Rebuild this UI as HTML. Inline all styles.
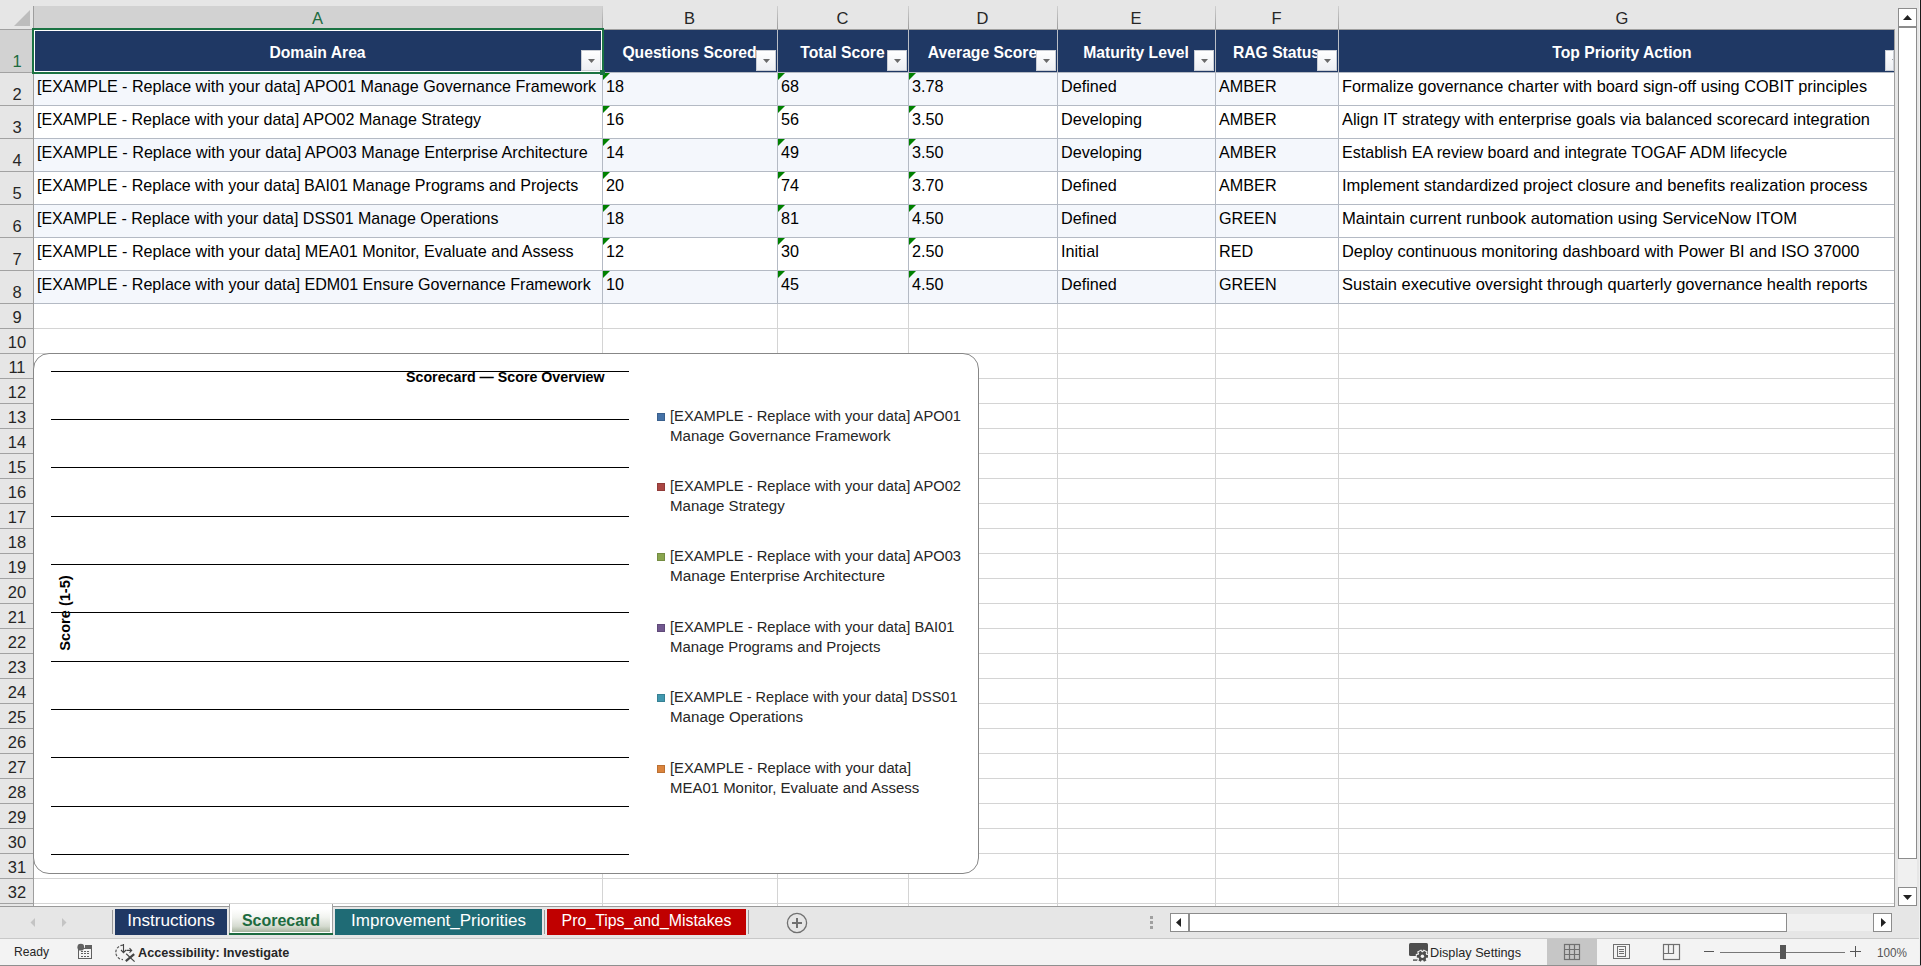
<!DOCTYPE html>
<html><head><meta charset="utf-8"><style>
html,body{margin:0;padding:0;}
body{width:1921px;height:966px;overflow:hidden;position:relative;background:#fff;font-family:"Liberation Sans",sans-serif;color:#000;}
div{box-sizing:border-box;}
.t{position:absolute;white-space:nowrap;line-height:16px;}
</style></head><body>
<div style="position:absolute;left:0px;top:0px;width:1921px;height:29px;background:#E6E6E6;"></div>
<div style="position:absolute;left:33px;top:6px;width:569px;height:23px;background:#D2D2D2;"></div>
<div style="position:absolute;left:602px;top:6px;width:1px;height:23px;background:linear-gradient(#D0D0D0,#9C9C9C);"></div>
<div style="position:absolute;left:777px;top:6px;width:1px;height:23px;background:linear-gradient(#D0D0D0,#9C9C9C);"></div>
<div style="position:absolute;left:908px;top:6px;width:1px;height:23px;background:linear-gradient(#D0D0D0,#9C9C9C);"></div>
<div style="position:absolute;left:1057px;top:6px;width:1px;height:23px;background:linear-gradient(#D0D0D0,#9C9C9C);"></div>
<div style="position:absolute;left:1215px;top:6px;width:1px;height:23px;background:linear-gradient(#D0D0D0,#9C9C9C);"></div>
<div style="position:absolute;left:1338px;top:6px;width:1px;height:23px;background:linear-gradient(#D0D0D0,#9C9C9C);"></div>
<div style="position:absolute;left:33px;top:6px;width:1px;height:23px;background:linear-gradient(#D0D0D0,#9C9C9C);"></div>
<div style="position:absolute;left:0px;top:29px;width:1894px;height:1px;background:#A0A0A0;"></div>
<svg style="position:absolute;left:0;top:0" width="33" height="29"><polygon points="30,10 30,26 14,26" fill="#BDBDBD"/></svg>
<div style="position:absolute;left:287.5px;top:10.03px;width:60px;text-align:center;white-space:nowrap;font-size:16.5px;line-height:16.5px;color:#1D6B40;">A</div>
<div style="position:absolute;left:659.5px;top:10.03px;width:60px;text-align:center;white-space:nowrap;font-size:16.5px;line-height:16.5px;color:#262626;">B</div>
<div style="position:absolute;left:812.5px;top:10.03px;width:60px;text-align:center;white-space:nowrap;font-size:16.5px;line-height:16.5px;color:#262626;">C</div>
<div style="position:absolute;left:952.5px;top:10.03px;width:60px;text-align:center;white-space:nowrap;font-size:16.5px;line-height:16.5px;color:#262626;">D</div>
<div style="position:absolute;left:1106.0px;top:10.03px;width:60px;text-align:center;white-space:nowrap;font-size:16.5px;line-height:16.5px;color:#262626;">E</div>
<div style="position:absolute;left:1246.5px;top:10.03px;width:60px;text-align:center;white-space:nowrap;font-size:16.5px;line-height:16.5px;color:#262626;">F</div>
<div style="position:absolute;left:1592.0px;top:10.03px;width:60px;text-align:center;white-space:nowrap;font-size:16.5px;line-height:16.5px;color:#262626;">G</div>
<div style="position:absolute;left:0px;top:30px;width:33px;height:876px;background:#E6E6E6;"></div>
<div style="position:absolute;left:0px;top:30px;width:33px;height:42px;background:#D2D2D2;"></div>
<div style="position:absolute;left:0px;top:72px;width:33px;height:1px;background:#A2A2A2;"></div>
<div style="position:absolute;left:0px;top:105px;width:33px;height:1px;background:#A2A2A2;"></div>
<div style="position:absolute;left:0px;top:138px;width:33px;height:1px;background:#A2A2A2;"></div>
<div style="position:absolute;left:0px;top:171px;width:33px;height:1px;background:#A2A2A2;"></div>
<div style="position:absolute;left:0px;top:204px;width:33px;height:1px;background:#A2A2A2;"></div>
<div style="position:absolute;left:0px;top:237px;width:33px;height:1px;background:#A2A2A2;"></div>
<div style="position:absolute;left:0px;top:270px;width:33px;height:1px;background:#A2A2A2;"></div>
<div style="position:absolute;left:0px;top:303px;width:33px;height:1px;background:#A2A2A2;"></div>
<div style="position:absolute;left:0px;top:328px;width:33px;height:1px;background:#A2A2A2;"></div>
<div style="position:absolute;left:0px;top:353px;width:33px;height:1px;background:#A2A2A2;"></div>
<div style="position:absolute;left:0px;top:378px;width:33px;height:1px;background:#A2A2A2;"></div>
<div style="position:absolute;left:0px;top:403px;width:33px;height:1px;background:#A2A2A2;"></div>
<div style="position:absolute;left:0px;top:428px;width:33px;height:1px;background:#A2A2A2;"></div>
<div style="position:absolute;left:0px;top:453px;width:33px;height:1px;background:#A2A2A2;"></div>
<div style="position:absolute;left:0px;top:478px;width:33px;height:1px;background:#A2A2A2;"></div>
<div style="position:absolute;left:0px;top:503px;width:33px;height:1px;background:#A2A2A2;"></div>
<div style="position:absolute;left:0px;top:528px;width:33px;height:1px;background:#A2A2A2;"></div>
<div style="position:absolute;left:0px;top:553px;width:33px;height:1px;background:#A2A2A2;"></div>
<div style="position:absolute;left:0px;top:578px;width:33px;height:1px;background:#A2A2A2;"></div>
<div style="position:absolute;left:0px;top:603px;width:33px;height:1px;background:#A2A2A2;"></div>
<div style="position:absolute;left:0px;top:628px;width:33px;height:1px;background:#A2A2A2;"></div>
<div style="position:absolute;left:0px;top:653px;width:33px;height:1px;background:#A2A2A2;"></div>
<div style="position:absolute;left:0px;top:678px;width:33px;height:1px;background:#A2A2A2;"></div>
<div style="position:absolute;left:0px;top:703px;width:33px;height:1px;background:#A2A2A2;"></div>
<div style="position:absolute;left:0px;top:728px;width:33px;height:1px;background:#A2A2A2;"></div>
<div style="position:absolute;left:0px;top:753px;width:33px;height:1px;background:#A2A2A2;"></div>
<div style="position:absolute;left:0px;top:778px;width:33px;height:1px;background:#A2A2A2;"></div>
<div style="position:absolute;left:0px;top:803px;width:33px;height:1px;background:#A2A2A2;"></div>
<div style="position:absolute;left:0px;top:828px;width:33px;height:1px;background:#A2A2A2;"></div>
<div style="position:absolute;left:0px;top:853px;width:33px;height:1px;background:#A2A2A2;"></div>
<div style="position:absolute;left:0px;top:878px;width:33px;height:1px;background:#A2A2A2;"></div>
<div style="position:absolute;left:0px;top:903px;width:33px;height:1px;background:#A2A2A2;"></div>
<div style="position:absolute;left:33px;top:6px;width:1px;height:900px;background:#9E9E9E;"></div>
<div style="position:absolute;left:0px;top:53.03px;width:34px;text-align:center;white-space:nowrap;font-size:16.5px;line-height:16.5px;color:#1D6B40;">1</div>
<div style="position:absolute;left:0px;top:86.03px;width:34px;text-align:center;white-space:nowrap;font-size:16.5px;line-height:16.5px;color:#262626;">2</div>
<div style="position:absolute;left:0px;top:119.03px;width:34px;text-align:center;white-space:nowrap;font-size:16.5px;line-height:16.5px;color:#262626;">3</div>
<div style="position:absolute;left:0px;top:152.03px;width:34px;text-align:center;white-space:nowrap;font-size:16.5px;line-height:16.5px;color:#262626;">4</div>
<div style="position:absolute;left:0px;top:185.03px;width:34px;text-align:center;white-space:nowrap;font-size:16.5px;line-height:16.5px;color:#262626;">5</div>
<div style="position:absolute;left:0px;top:218.03px;width:34px;text-align:center;white-space:nowrap;font-size:16.5px;line-height:16.5px;color:#262626;">6</div>
<div style="position:absolute;left:0px;top:251.03px;width:34px;text-align:center;white-space:nowrap;font-size:16.5px;line-height:16.5px;color:#262626;">7</div>
<div style="position:absolute;left:0px;top:284.03px;width:34px;text-align:center;white-space:nowrap;font-size:16.5px;line-height:16.5px;color:#262626;">8</div>
<div style="position:absolute;left:0px;top:309.03px;width:34px;text-align:center;white-space:nowrap;font-size:16.5px;line-height:16.5px;color:#262626;">9</div>
<div style="position:absolute;left:0px;top:334.03px;width:34px;text-align:center;white-space:nowrap;font-size:16.5px;line-height:16.5px;color:#262626;">10</div>
<div style="position:absolute;left:0px;top:359.03px;width:34px;text-align:center;white-space:nowrap;font-size:16.5px;line-height:16.5px;color:#262626;">11</div>
<div style="position:absolute;left:0px;top:384.03px;width:34px;text-align:center;white-space:nowrap;font-size:16.5px;line-height:16.5px;color:#262626;">12</div>
<div style="position:absolute;left:0px;top:409.03px;width:34px;text-align:center;white-space:nowrap;font-size:16.5px;line-height:16.5px;color:#262626;">13</div>
<div style="position:absolute;left:0px;top:434.03px;width:34px;text-align:center;white-space:nowrap;font-size:16.5px;line-height:16.5px;color:#262626;">14</div>
<div style="position:absolute;left:0px;top:459.03px;width:34px;text-align:center;white-space:nowrap;font-size:16.5px;line-height:16.5px;color:#262626;">15</div>
<div style="position:absolute;left:0px;top:484.03px;width:34px;text-align:center;white-space:nowrap;font-size:16.5px;line-height:16.5px;color:#262626;">16</div>
<div style="position:absolute;left:0px;top:509.03px;width:34px;text-align:center;white-space:nowrap;font-size:16.5px;line-height:16.5px;color:#262626;">17</div>
<div style="position:absolute;left:0px;top:534.03px;width:34px;text-align:center;white-space:nowrap;font-size:16.5px;line-height:16.5px;color:#262626;">18</div>
<div style="position:absolute;left:0px;top:559.03px;width:34px;text-align:center;white-space:nowrap;font-size:16.5px;line-height:16.5px;color:#262626;">19</div>
<div style="position:absolute;left:0px;top:584.03px;width:34px;text-align:center;white-space:nowrap;font-size:16.5px;line-height:16.5px;color:#262626;">20</div>
<div style="position:absolute;left:0px;top:609.03px;width:34px;text-align:center;white-space:nowrap;font-size:16.5px;line-height:16.5px;color:#262626;">21</div>
<div style="position:absolute;left:0px;top:634.03px;width:34px;text-align:center;white-space:nowrap;font-size:16.5px;line-height:16.5px;color:#262626;">22</div>
<div style="position:absolute;left:0px;top:659.03px;width:34px;text-align:center;white-space:nowrap;font-size:16.5px;line-height:16.5px;color:#262626;">23</div>
<div style="position:absolute;left:0px;top:684.03px;width:34px;text-align:center;white-space:nowrap;font-size:16.5px;line-height:16.5px;color:#262626;">24</div>
<div style="position:absolute;left:0px;top:709.03px;width:34px;text-align:center;white-space:nowrap;font-size:16.5px;line-height:16.5px;color:#262626;">25</div>
<div style="position:absolute;left:0px;top:734.03px;width:34px;text-align:center;white-space:nowrap;font-size:16.5px;line-height:16.5px;color:#262626;">26</div>
<div style="position:absolute;left:0px;top:759.03px;width:34px;text-align:center;white-space:nowrap;font-size:16.5px;line-height:16.5px;color:#262626;">27</div>
<div style="position:absolute;left:0px;top:784.03px;width:34px;text-align:center;white-space:nowrap;font-size:16.5px;line-height:16.5px;color:#262626;">28</div>
<div style="position:absolute;left:0px;top:809.03px;width:34px;text-align:center;white-space:nowrap;font-size:16.5px;line-height:16.5px;color:#262626;">29</div>
<div style="position:absolute;left:0px;top:834.03px;width:34px;text-align:center;white-space:nowrap;font-size:16.5px;line-height:16.5px;color:#262626;">30</div>
<div style="position:absolute;left:0px;top:859.03px;width:34px;text-align:center;white-space:nowrap;font-size:16.5px;line-height:16.5px;color:#262626;">31</div>
<div style="position:absolute;left:0px;top:884.03px;width:34px;text-align:center;white-space:nowrap;font-size:16.5px;line-height:16.5px;color:#262626;">32</div>
<div style="position:absolute;left:34px;top:303px;width:1860px;height:1px;background:#D4D4D4;"></div>
<div style="position:absolute;left:34px;top:328px;width:1860px;height:1px;background:#D4D4D4;"></div>
<div style="position:absolute;left:34px;top:353px;width:1860px;height:1px;background:#D4D4D4;"></div>
<div style="position:absolute;left:34px;top:378px;width:1860px;height:1px;background:#D4D4D4;"></div>
<div style="position:absolute;left:34px;top:403px;width:1860px;height:1px;background:#D4D4D4;"></div>
<div style="position:absolute;left:34px;top:428px;width:1860px;height:1px;background:#D4D4D4;"></div>
<div style="position:absolute;left:34px;top:453px;width:1860px;height:1px;background:#D4D4D4;"></div>
<div style="position:absolute;left:34px;top:478px;width:1860px;height:1px;background:#D4D4D4;"></div>
<div style="position:absolute;left:34px;top:503px;width:1860px;height:1px;background:#D4D4D4;"></div>
<div style="position:absolute;left:34px;top:528px;width:1860px;height:1px;background:#D4D4D4;"></div>
<div style="position:absolute;left:34px;top:553px;width:1860px;height:1px;background:#D4D4D4;"></div>
<div style="position:absolute;left:34px;top:578px;width:1860px;height:1px;background:#D4D4D4;"></div>
<div style="position:absolute;left:34px;top:603px;width:1860px;height:1px;background:#D4D4D4;"></div>
<div style="position:absolute;left:34px;top:628px;width:1860px;height:1px;background:#D4D4D4;"></div>
<div style="position:absolute;left:34px;top:653px;width:1860px;height:1px;background:#D4D4D4;"></div>
<div style="position:absolute;left:34px;top:678px;width:1860px;height:1px;background:#D4D4D4;"></div>
<div style="position:absolute;left:34px;top:703px;width:1860px;height:1px;background:#D4D4D4;"></div>
<div style="position:absolute;left:34px;top:728px;width:1860px;height:1px;background:#D4D4D4;"></div>
<div style="position:absolute;left:34px;top:753px;width:1860px;height:1px;background:#D4D4D4;"></div>
<div style="position:absolute;left:34px;top:778px;width:1860px;height:1px;background:#D4D4D4;"></div>
<div style="position:absolute;left:34px;top:803px;width:1860px;height:1px;background:#D4D4D4;"></div>
<div style="position:absolute;left:34px;top:828px;width:1860px;height:1px;background:#D4D4D4;"></div>
<div style="position:absolute;left:34px;top:853px;width:1860px;height:1px;background:#D4D4D4;"></div>
<div style="position:absolute;left:34px;top:878px;width:1860px;height:1px;background:#D4D4D4;"></div>
<div style="position:absolute;left:34px;top:903px;width:1860px;height:1px;background:#D4D4D4;"></div>
<div style="position:absolute;left:602px;top:303px;width:1px;height:603px;background:#D4D4D4;"></div>
<div style="position:absolute;left:777px;top:303px;width:1px;height:603px;background:#D4D4D4;"></div>
<div style="position:absolute;left:908px;top:303px;width:1px;height:603px;background:#D4D4D4;"></div>
<div style="position:absolute;left:1057px;top:303px;width:1px;height:603px;background:#D4D4D4;"></div>
<div style="position:absolute;left:1215px;top:303px;width:1px;height:603px;background:#D4D4D4;"></div>
<div style="position:absolute;left:1338px;top:303px;width:1px;height:603px;background:#D4D4D4;"></div>
<div style="position:absolute;left:34px;top:30px;width:1860px;height:42px;background:#1F3864;"></div>
<div style="position:absolute;left:602px;top:30px;width:1px;height:42px;background:#B9BDC5;"></div>
<div style="position:absolute;left:777px;top:30px;width:1px;height:42px;background:#B9BDC5;"></div>
<div style="position:absolute;left:908px;top:30px;width:1px;height:42px;background:#B9BDC5;"></div>
<div style="position:absolute;left:1057px;top:30px;width:1px;height:42px;background:#B9BDC5;"></div>
<div style="position:absolute;left:1215px;top:30px;width:1px;height:42px;background:#B9BDC5;"></div>
<div style="position:absolute;left:1338px;top:30px;width:1px;height:42px;background:#B9BDC5;"></div>
<div style="position:absolute;left:33px;top:44.71px;width:569px;text-align:center;white-space:nowrap;font-size:15.7px;line-height:15.7px;font-weight:bold;color:#fff;">Domain Area</div>
<div style="position:absolute;left:602px;top:44.71px;width:175px;text-align:center;white-space:nowrap;font-size:15.7px;line-height:15.7px;font-weight:bold;color:#fff;">Questions Scored</div>
<div style="position:absolute;left:777px;top:44.71px;width:131px;text-align:center;white-space:nowrap;font-size:15.7px;line-height:15.7px;font-weight:bold;color:#fff;">Total Score</div>
<div style="position:absolute;left:908px;top:44.71px;width:149px;text-align:center;white-space:nowrap;font-size:15.7px;line-height:15.7px;font-weight:bold;color:#fff;">Average Score</div>
<div style="position:absolute;left:1057px;top:44.71px;width:158px;text-align:center;white-space:nowrap;font-size:15.7px;line-height:15.7px;font-weight:bold;color:#fff;">Maturity Level</div>
<div style="position:absolute;left:1215px;top:44.71px;width:123px;text-align:center;white-space:nowrap;font-size:15.7px;line-height:15.7px;font-weight:bold;color:#fff;">RAG Status</div>
<div style="position:absolute;left:1338px;top:44.71px;width:568px;text-align:center;white-space:nowrap;font-size:15.7px;line-height:15.7px;font-weight:bold;color:#fff;">Top Priority Action</div>
<div style="position:absolute;left:581px;top:50px;width:20px;height:21px;background:linear-gradient(#fff,#EDEFF3);border:1px solid #C9CDD4;overflow:hidden"><svg style="position:absolute;left:6px;top:8px" width="8" height="5"><polygon points="0,0 7,0 3.5,4" fill="#6A6A6A"/></svg></div>
<div style="position:absolute;left:756px;top:50px;width:20px;height:21px;background:linear-gradient(#fff,#EDEFF3);border:1px solid #C9CDD4;overflow:hidden"><svg style="position:absolute;left:6px;top:8px" width="8" height="5"><polygon points="0,0 7,0 3.5,4" fill="#6A6A6A"/></svg></div>
<div style="position:absolute;left:887px;top:50px;width:20px;height:21px;background:linear-gradient(#fff,#EDEFF3);border:1px solid #C9CDD4;overflow:hidden"><svg style="position:absolute;left:6px;top:8px" width="8" height="5"><polygon points="0,0 7,0 3.5,4" fill="#6A6A6A"/></svg></div>
<div style="position:absolute;left:1036px;top:50px;width:20px;height:21px;background:linear-gradient(#fff,#EDEFF3);border:1px solid #C9CDD4;overflow:hidden"><svg style="position:absolute;left:6px;top:8px" width="8" height="5"><polygon points="0,0 7,0 3.5,4" fill="#6A6A6A"/></svg></div>
<div style="position:absolute;left:1194px;top:50px;width:20px;height:21px;background:linear-gradient(#fff,#EDEFF3);border:1px solid #C9CDD4;overflow:hidden"><svg style="position:absolute;left:6px;top:8px" width="8" height="5"><polygon points="0,0 7,0 3.5,4" fill="#6A6A6A"/></svg></div>
<div style="position:absolute;left:1317px;top:50px;width:20px;height:21px;background:linear-gradient(#fff,#EDEFF3);border:1px solid #C9CDD4;overflow:hidden"><svg style="position:absolute;left:6px;top:8px" width="8" height="5"><polygon points="0,0 7,0 3.5,4" fill="#6A6A6A"/></svg></div>
<div style="position:absolute;left:1885px;top:50px;width:9px;height:21px;background:linear-gradient(#fff,#EDEFF3);border:1px solid #C9CDD4;overflow:hidden"><svg style="position:absolute;left:6px;top:8px" width="8" height="5"><polygon points="0,0 7,0 3.5,4" fill="#6A6A6A"/></svg></div>
<div style="position:absolute;left:34px;top:73px;width:1304px;height:32px;background:#F4F7FC;"></div>
<div style="position:absolute;left:37px;top:78.29px;white-space:nowrap;font-size:16.2px;line-height:16.2px;transform:scaleX(0.9959);transform-origin:left 50%;color:#000;">[EXAMPLE - Replace with your data] APO01 Manage Governance Framework</div>
<div style="position:absolute;left:606px;top:78.29px;white-space:nowrap;font-size:16.2px;line-height:16.2px;color:#000;">18</div>
<div style="position:absolute;left:781px;top:78.29px;white-space:nowrap;font-size:16.2px;line-height:16.2px;color:#000;">68</div>
<div style="position:absolute;left:912px;top:78.29px;white-space:nowrap;font-size:16.2px;line-height:16.2px;color:#000;">3.78</div>
<div style="position:absolute;left:1061px;top:78.29px;white-space:nowrap;font-size:16.2px;line-height:16.2px;color:#000;">Defined</div>
<div style="position:absolute;left:1219px;top:78.29px;white-space:nowrap;font-size:16.2px;line-height:16.2px;color:#000;">AMBER</div>
<div style="position:absolute;left:1342px;top:78.29px;white-space:nowrap;font-size:16.2px;line-height:16.2px;transform:scaleX(1.0074);transform-origin:left 50%;color:#000;">Formalize governance charter with board sign-off using COBIT principles</div>
<svg style="position:absolute;left:603px;top:73px" width="8" height="8"><polygon points="0,0 7,0 0,7" fill="#008000"/></svg>
<svg style="position:absolute;left:778px;top:73px" width="8" height="8"><polygon points="0,0 7,0 0,7" fill="#008000"/></svg>
<svg style="position:absolute;left:909px;top:73px" width="8" height="8"><polygon points="0,0 7,0 0,7" fill="#008000"/></svg>
<div style="position:absolute;left:37px;top:111.29px;white-space:nowrap;font-size:16.2px;line-height:16.2px;transform:scaleX(0.9911);transform-origin:left 50%;color:#000;">[EXAMPLE - Replace with your data] APO02 Manage Strategy</div>
<div style="position:absolute;left:606px;top:111.29px;white-space:nowrap;font-size:16.2px;line-height:16.2px;color:#000;">16</div>
<div style="position:absolute;left:781px;top:111.29px;white-space:nowrap;font-size:16.2px;line-height:16.2px;color:#000;">56</div>
<div style="position:absolute;left:912px;top:111.29px;white-space:nowrap;font-size:16.2px;line-height:16.2px;color:#000;">3.50</div>
<div style="position:absolute;left:1061px;top:111.29px;white-space:nowrap;font-size:16.2px;line-height:16.2px;color:#000;">Developing</div>
<div style="position:absolute;left:1219px;top:111.29px;white-space:nowrap;font-size:16.2px;line-height:16.2px;color:#000;">AMBER</div>
<div style="position:absolute;left:1342px;top:111.29px;white-space:nowrap;font-size:16.2px;line-height:16.2px;transform:scaleX(1.0139);transform-origin:left 50%;color:#000;">Align IT strategy with enterprise goals via balanced scorecard integration</div>
<svg style="position:absolute;left:603px;top:106px" width="8" height="8"><polygon points="0,0 7,0 0,7" fill="#008000"/></svg>
<svg style="position:absolute;left:778px;top:106px" width="8" height="8"><polygon points="0,0 7,0 0,7" fill="#008000"/></svg>
<svg style="position:absolute;left:909px;top:106px" width="8" height="8"><polygon points="0,0 7,0 0,7" fill="#008000"/></svg>
<div style="position:absolute;left:34px;top:139px;width:1304px;height:32px;background:#F4F7FC;"></div>
<div style="position:absolute;left:37px;top:144.29px;white-space:nowrap;font-size:16.2px;line-height:16.2px;transform:scaleX(0.9985);transform-origin:left 50%;color:#000;">[EXAMPLE - Replace with your data] APO03 Manage Enterprise Architecture</div>
<div style="position:absolute;left:606px;top:144.29px;white-space:nowrap;font-size:16.2px;line-height:16.2px;color:#000;">14</div>
<div style="position:absolute;left:781px;top:144.29px;white-space:nowrap;font-size:16.2px;line-height:16.2px;color:#000;">49</div>
<div style="position:absolute;left:912px;top:144.29px;white-space:nowrap;font-size:16.2px;line-height:16.2px;color:#000;">3.50</div>
<div style="position:absolute;left:1061px;top:144.29px;white-space:nowrap;font-size:16.2px;line-height:16.2px;color:#000;">Developing</div>
<div style="position:absolute;left:1219px;top:144.29px;white-space:nowrap;font-size:16.2px;line-height:16.2px;color:#000;">AMBER</div>
<div style="position:absolute;left:1342px;top:144.29px;white-space:nowrap;font-size:16.2px;line-height:16.2px;transform:scaleX(0.9930);transform-origin:left 50%;color:#000;">Establish EA review board and integrate TOGAF ADM lifecycle</div>
<svg style="position:absolute;left:603px;top:139px" width="8" height="8"><polygon points="0,0 7,0 0,7" fill="#008000"/></svg>
<svg style="position:absolute;left:778px;top:139px" width="8" height="8"><polygon points="0,0 7,0 0,7" fill="#008000"/></svg>
<svg style="position:absolute;left:909px;top:139px" width="8" height="8"><polygon points="0,0 7,0 0,7" fill="#008000"/></svg>
<div style="position:absolute;left:37px;top:177.29px;white-space:nowrap;font-size:16.2px;line-height:16.2px;transform:scaleX(0.9928);transform-origin:left 50%;color:#000;">[EXAMPLE - Replace with your data] BAI01 Manage Programs and Projects</div>
<div style="position:absolute;left:606px;top:177.29px;white-space:nowrap;font-size:16.2px;line-height:16.2px;color:#000;">20</div>
<div style="position:absolute;left:781px;top:177.29px;white-space:nowrap;font-size:16.2px;line-height:16.2px;color:#000;">74</div>
<div style="position:absolute;left:912px;top:177.29px;white-space:nowrap;font-size:16.2px;line-height:16.2px;color:#000;">3.70</div>
<div style="position:absolute;left:1061px;top:177.29px;white-space:nowrap;font-size:16.2px;line-height:16.2px;color:#000;">Defined</div>
<div style="position:absolute;left:1219px;top:177.29px;white-space:nowrap;font-size:16.2px;line-height:16.2px;color:#000;">AMBER</div>
<div style="position:absolute;left:1342px;top:177.29px;white-space:nowrap;font-size:16.2px;line-height:16.2px;transform:scaleX(1.0212);transform-origin:left 50%;color:#000;">Implement standardized project closure and benefits realization process</div>
<svg style="position:absolute;left:603px;top:172px" width="8" height="8"><polygon points="0,0 7,0 0,7" fill="#008000"/></svg>
<svg style="position:absolute;left:778px;top:172px" width="8" height="8"><polygon points="0,0 7,0 0,7" fill="#008000"/></svg>
<svg style="position:absolute;left:909px;top:172px" width="8" height="8"><polygon points="0,0 7,0 0,7" fill="#008000"/></svg>
<div style="position:absolute;left:34px;top:205px;width:1304px;height:32px;background:#F4F7FC;"></div>
<div style="position:absolute;left:37px;top:210.29px;white-space:nowrap;font-size:16.2px;line-height:16.2px;transform:scaleX(0.9883);transform-origin:left 50%;color:#000;">[EXAMPLE - Replace with your data] DSS01 Manage Operations</div>
<div style="position:absolute;left:606px;top:210.29px;white-space:nowrap;font-size:16.2px;line-height:16.2px;color:#000;">18</div>
<div style="position:absolute;left:781px;top:210.29px;white-space:nowrap;font-size:16.2px;line-height:16.2px;color:#000;">81</div>
<div style="position:absolute;left:912px;top:210.29px;white-space:nowrap;font-size:16.2px;line-height:16.2px;color:#000;">4.50</div>
<div style="position:absolute;left:1061px;top:210.29px;white-space:nowrap;font-size:16.2px;line-height:16.2px;color:#000;">Defined</div>
<div style="position:absolute;left:1219px;top:210.29px;white-space:nowrap;font-size:16.2px;line-height:16.2px;color:#000;">GREEN</div>
<div style="position:absolute;left:1342px;top:210.29px;white-space:nowrap;font-size:16.2px;line-height:16.2px;transform:scaleX(1.0286);transform-origin:left 50%;color:#000;">Maintain current runbook automation using ServiceNow ITOM</div>
<svg style="position:absolute;left:603px;top:205px" width="8" height="8"><polygon points="0,0 7,0 0,7" fill="#008000"/></svg>
<svg style="position:absolute;left:778px;top:205px" width="8" height="8"><polygon points="0,0 7,0 0,7" fill="#008000"/></svg>
<svg style="position:absolute;left:909px;top:205px" width="8" height="8"><polygon points="0,0 7,0 0,7" fill="#008000"/></svg>
<div style="position:absolute;left:37px;top:243.29px;white-space:nowrap;font-size:16.2px;line-height:16.2px;transform:scaleX(0.9957);transform-origin:left 50%;color:#000;">[EXAMPLE - Replace with your data] MEA01 Monitor, Evaluate and Assess</div>
<div style="position:absolute;left:606px;top:243.29px;white-space:nowrap;font-size:16.2px;line-height:16.2px;color:#000;">12</div>
<div style="position:absolute;left:781px;top:243.29px;white-space:nowrap;font-size:16.2px;line-height:16.2px;color:#000;">30</div>
<div style="position:absolute;left:912px;top:243.29px;white-space:nowrap;font-size:16.2px;line-height:16.2px;color:#000;">2.50</div>
<div style="position:absolute;left:1061px;top:243.29px;white-space:nowrap;font-size:16.2px;line-height:16.2px;color:#000;">Initial</div>
<div style="position:absolute;left:1219px;top:243.29px;white-space:nowrap;font-size:16.2px;line-height:16.2px;color:#000;">RED</div>
<div style="position:absolute;left:1342px;top:243.29px;white-space:nowrap;font-size:16.2px;line-height:16.2px;transform:scaleX(1.0123);transform-origin:left 50%;color:#000;">Deploy continuous monitoring dashboard with Power BI and ISO 37000</div>
<svg style="position:absolute;left:603px;top:238px" width="8" height="8"><polygon points="0,0 7,0 0,7" fill="#008000"/></svg>
<svg style="position:absolute;left:778px;top:238px" width="8" height="8"><polygon points="0,0 7,0 0,7" fill="#008000"/></svg>
<svg style="position:absolute;left:909px;top:238px" width="8" height="8"><polygon points="0,0 7,0 0,7" fill="#008000"/></svg>
<div style="position:absolute;left:34px;top:271px;width:1304px;height:32px;background:#F4F7FC;"></div>
<div style="position:absolute;left:37px;top:276.29px;white-space:nowrap;font-size:16.2px;line-height:16.2px;transform:scaleX(0.9942);transform-origin:left 50%;color:#000;">[EXAMPLE - Replace with your data] EDM01 Ensure Governance Framework</div>
<div style="position:absolute;left:606px;top:276.29px;white-space:nowrap;font-size:16.2px;line-height:16.2px;color:#000;">10</div>
<div style="position:absolute;left:781px;top:276.29px;white-space:nowrap;font-size:16.2px;line-height:16.2px;color:#000;">45</div>
<div style="position:absolute;left:912px;top:276.29px;white-space:nowrap;font-size:16.2px;line-height:16.2px;color:#000;">4.50</div>
<div style="position:absolute;left:1061px;top:276.29px;white-space:nowrap;font-size:16.2px;line-height:16.2px;color:#000;">Defined</div>
<div style="position:absolute;left:1219px;top:276.29px;white-space:nowrap;font-size:16.2px;line-height:16.2px;color:#000;">GREEN</div>
<div style="position:absolute;left:1342px;top:276.29px;white-space:nowrap;font-size:16.2px;line-height:16.2px;transform:scaleX(1.0176);transform-origin:left 50%;color:#000;">Sustain executive oversight through quarterly governance health reports</div>
<svg style="position:absolute;left:603px;top:271px" width="8" height="8"><polygon points="0,0 7,0 0,7" fill="#008000"/></svg>
<svg style="position:absolute;left:778px;top:271px" width="8" height="8"><polygon points="0,0 7,0 0,7" fill="#008000"/></svg>
<svg style="position:absolute;left:909px;top:271px" width="8" height="8"><polygon points="0,0 7,0 0,7" fill="#008000"/></svg>
<div style="position:absolute;left:34px;top:72px;width:1860px;height:1px;background:#B4BAC4;"></div>
<div style="position:absolute;left:34px;top:105px;width:1860px;height:1px;background:#B4BAC4;"></div>
<div style="position:absolute;left:34px;top:138px;width:1860px;height:1px;background:#B4BAC4;"></div>
<div style="position:absolute;left:34px;top:171px;width:1860px;height:1px;background:#B4BAC4;"></div>
<div style="position:absolute;left:34px;top:204px;width:1860px;height:1px;background:#B4BAC4;"></div>
<div style="position:absolute;left:34px;top:237px;width:1860px;height:1px;background:#B4BAC4;"></div>
<div style="position:absolute;left:34px;top:270px;width:1860px;height:1px;background:#B4BAC4;"></div>
<div style="position:absolute;left:34px;top:303px;width:1860px;height:1px;background:#B4BAC4;"></div>
<div style="position:absolute;left:602px;top:72px;width:1px;height:231px;background:#B4BAC4;"></div>
<div style="position:absolute;left:777px;top:72px;width:1px;height:231px;background:#B4BAC4;"></div>
<div style="position:absolute;left:908px;top:72px;width:1px;height:231px;background:#B4BAC4;"></div>
<div style="position:absolute;left:1057px;top:72px;width:1px;height:231px;background:#B4BAC4;"></div>
<div style="position:absolute;left:1215px;top:72px;width:1px;height:231px;background:#B4BAC4;"></div>
<div style="position:absolute;left:1338px;top:72px;width:1px;height:231px;background:#B4BAC4;"></div>
<div style="position:absolute;left:1894px;top:29px;width:1px;height:878px;background:#A0A0A0;"></div>
<div style="position:absolute;left:32px;top:28px;width:572px;height:46px;border:2px solid #1B7343;"></div>
<div style="position:absolute;left:34px;top:30px;width:568px;height:42px;border:1px solid #fff;"></div>
<div style="position:absolute;left:600px;top:70px;width:5px;height:5px;background:#1B7343;"></div>
<div style="position:absolute;left:33px;top:353px;width:946px;height:521px;background:#fff;border:1px solid #878787;border-radius:16px;"></div>
<div style="position:absolute;left:51px;top:371px;width:578px;height:1px;background:#000;"></div>
<div style="position:absolute;left:51px;top:419px;width:578px;height:1px;background:#000;"></div>
<div style="position:absolute;left:51px;top:467px;width:578px;height:1px;background:#000;"></div>
<div style="position:absolute;left:51px;top:516px;width:578px;height:1px;background:#000;"></div>
<div style="position:absolute;left:51px;top:564px;width:578px;height:1px;background:#000;"></div>
<div style="position:absolute;left:51px;top:612px;width:578px;height:1px;background:#000;"></div>
<div style="position:absolute;left:51px;top:661px;width:578px;height:1px;background:#000;"></div>
<div style="position:absolute;left:51px;top:709px;width:578px;height:1px;background:#000;"></div>
<div style="position:absolute;left:51px;top:757px;width:578px;height:1px;background:#000;"></div>
<div style="position:absolute;left:51px;top:806px;width:578px;height:1px;background:#000;"></div>
<div style="position:absolute;left:51px;top:854px;width:578px;height:1px;background:#000;"></div>
<div style="position:absolute;left:406px;top:369.98px;white-space:nowrap;font-size:14.2px;line-height:14.2px;font-weight:bold;transform:scaleX(1.0033);transform-origin:left 50%;">Scorecard — Score Overview</div>
<div style="position:absolute;left:26.5px;top:606px;width:76px;height:14px;line-height:14px;font-size:14.6px;font-weight:bold;white-space:nowrap;text-align:center;transform:rotate(-90deg);">Score (1-5)</div>
<div style="position:absolute;left:657px;top:413px;width:8px;height:8px;background:#4572A7;border:1px solid #3A608D;"></div>
<div style="position:absolute;left:670px;top:409.43px;white-space:nowrap;font-size:14.85px;line-height:14.85px;transform:scaleX(0.9907);transform-origin:left 50%;color:#262626;">[EXAMPLE - Replace with your data] APO01</div>
<div style="position:absolute;left:670px;top:429.43px;white-space:nowrap;font-size:14.85px;line-height:14.85px;transform:scaleX(1.0162);transform-origin:left 50%;color:#262626;">Manage Governance Framework</div>
<div style="position:absolute;left:657px;top:483px;width:8px;height:8px;background:#AA4643;border:1px solid #903B38;"></div>
<div style="position:absolute;left:670px;top:479.43px;white-space:nowrap;font-size:14.85px;line-height:14.85px;transform:scaleX(0.9907);transform-origin:left 50%;color:#262626;">[EXAMPLE - Replace with your data] APO02</div>
<div style="position:absolute;left:670px;top:499.43px;white-space:nowrap;font-size:14.85px;line-height:14.85px;transform:scaleX(1.0146);transform-origin:left 50%;color:#262626;">Manage Strategy</div>
<div style="position:absolute;left:657px;top:553px;width:8px;height:8px;background:#89A54E;border:1px solid #748C42;"></div>
<div style="position:absolute;left:670px;top:549.43px;white-space:nowrap;font-size:14.85px;line-height:14.85px;transform:scaleX(0.9907);transform-origin:left 50%;color:#262626;">[EXAMPLE - Replace with your data] APO03</div>
<div style="position:absolute;left:670px;top:569.43px;white-space:nowrap;font-size:14.85px;line-height:14.85px;transform:scaleX(1.0343);transform-origin:left 50%;color:#262626;">Manage Enterprise Architecture</div>
<div style="position:absolute;left:657px;top:624px;width:8px;height:8px;background:#71588F;border:1px solid #604A79;"></div>
<div style="position:absolute;left:670px;top:620.43px;white-space:nowrap;font-size:14.85px;line-height:14.85px;transform:scaleX(0.9909);transform-origin:left 50%;color:#262626;">[EXAMPLE - Replace with your data] BAI01</div>
<div style="position:absolute;left:670px;top:640.43px;white-space:nowrap;font-size:14.85px;line-height:14.85px;transform:scaleX(1.0080);transform-origin:left 50%;color:#262626;">Manage Programs and Projects</div>
<div style="position:absolute;left:657px;top:694px;width:8px;height:8px;background:#4198AF;border:1px solid #378194;"></div>
<div style="position:absolute;left:670px;top:690.43px;white-space:nowrap;font-size:14.85px;line-height:14.85px;transform:scaleX(0.9788);transform-origin:left 50%;color:#262626;">[EXAMPLE - Replace with your data] DSS01</div>
<div style="position:absolute;left:670px;top:710.43px;white-space:nowrap;font-size:14.85px;line-height:14.85px;transform:scaleX(1.0201);transform-origin:left 50%;color:#262626;">Manage Operations</div>
<div style="position:absolute;left:657px;top:765px;width:8px;height:8px;background:#DB843D;border:1px solid #BA7033;"></div>
<div style="position:absolute;left:670px;top:761.43px;white-space:nowrap;font-size:14.85px;line-height:14.85px;transform:scaleX(0.9936);transform-origin:left 50%;color:#262626;">[EXAMPLE - Replace with your data]</div>
<div style="position:absolute;left:670px;top:781.43px;white-space:nowrap;font-size:14.85px;line-height:14.85px;transform:scaleX(1.0066);transform-origin:left 50%;color:#262626;">MEA01 Monitor, Evaluate and Assess</div>
<div style="position:absolute;left:1895px;top:0px;width:26px;height:906px;background:#E6E6E6;"></div>
<div style="position:absolute;left:1898px;top:8px;width:19px;height:19px;background:#fff;border:1px solid #8C8C8C;"><svg style="position:absolute;left:4px;top:6px" width="10" height="6"><polygon points="0,5 9,5 4.5,0" fill="#222"/></svg></div>
<div style="position:absolute;left:1898px;top:27px;width:19px;height:832px;background:#fff;border:1px solid #8C8C8C;"></div>
<div style="position:absolute;left:1898px;top:859px;width:19px;height:28px;background:#F0F0F0;"></div>
<div style="position:absolute;left:1898px;top:887px;width:19px;height:19px;background:#fff;border:1px solid #8C8C8C;"><svg style="position:absolute;left:4px;top:7px" width="10" height="6"><polygon points="0,0 9,0 4.5,5" fill="#222"/></svg></div>
<div style="position:absolute;left:1919px;top:0px;width:1px;height:966px;background:#F0F0F0;"></div>
<div style="position:absolute;left:1920px;top:0px;width:1px;height:966px;background:#1A1A1A;"></div>
<div style="position:absolute;left:0px;top:906px;width:1919px;height:32px;background:#E6E6E6;"></div>
<div style="position:absolute;left:0px;top:906px;width:229px;height:1px;background:#9A9A9A;"></div>
<div style="position:absolute;left:333px;top:906px;width:1562px;height:1px;background:#9A9A9A;"></div>
<div style="position:absolute;left:0px;top:938px;width:1919px;height:1px;background:#C8C8C8;"></div>
<svg style="position:absolute;left:28px;top:917px" width="42" height="13"><polygon points="7,1 7,10 2.5,5.5" fill="#C4C4C4"/><polygon points="34,1 34,10 38.5,5.5" fill="#C4C4C4"/></svg>
<div style="position:absolute;left:112px;top:910px;width:1px;height:24px;background:#9A9A9A;"></div>
<div style="position:absolute;left:115px;top:909px;width:112px;height:26px;background:#1F3864;"></div>
<div style="position:absolute;left:115px;top:911.61px;width:112px;text-align:center;white-space:nowrap;font-size:17px;line-height:17px;transform:scaleX(1.0089);transform-origin:center 50%;color:#fff;">Instructions</div>
<div style="position:absolute;left:229px;top:904px;width:104px;height:30px;border-left:1px solid #A0A0A0;border-right:1px solid #A0A0A0;background:#fff;"></div>
<div style="position:absolute;left:232px;top:909px;width:98px;height:23px;background:linear-gradient(#FFFFFF 0%,#F2F4F0 35%,#D5DBD0 75%,#A8B49F 100%);"></div>
<div style="position:absolute;left:229px;top:933px;width:104px;height:2px;background:#1D6B40;"></div>
<div style="position:absolute;left:229px;top:911.61px;width:104px;text-align:center;white-space:nowrap;font-size:17px;line-height:17px;font-weight:bold;transform:scaleX(0.9380);transform-origin:center 50%;color:#1D6B40;">Scorecard</div>
<div style="position:absolute;left:335px;top:909px;width:207px;height:26px;background:#1F6B75;"></div>
<div style="position:absolute;left:335px;top:911.61px;width:207px;text-align:center;white-space:nowrap;font-size:17px;line-height:17px;transform:scaleX(1.0001);transform-origin:center 50%;color:#fff;">Improvement_Priorities</div>
<div style="position:absolute;left:544px;top:910px;width:1px;height:24px;background:#9A9A9A;"></div>
<div style="position:absolute;left:547px;top:909px;width:199px;height:26px;background:#C00000;"></div>
<div style="position:absolute;left:547px;top:911.61px;width:199px;text-align:center;white-space:nowrap;font-size:17px;line-height:17px;transform:scaleX(0.9343);transform-origin:center 50%;color:#fff;">Pro_Tips_and_Mistakes</div>
<div style="position:absolute;left:748px;top:910px;width:1px;height:24px;background:#9A9A9A;"></div>
<svg style="position:absolute;left:786px;top:912px" width="23" height="23"><circle cx="11" cy="11" r="9.6" fill="none" stroke="#707070" stroke-width="1.3"/><rect x="6" y="10" width="10" height="2" fill="#707070"/><rect x="10" y="6" width="2" height="10" fill="#707070"/></svg>
<div style="position:absolute;left:1150px;top:916px;width:3px;height:3px;background:#A0A0A0;"></div>
<div style="position:absolute;left:1150px;top:921px;width:3px;height:3px;background:#A0A0A0;"></div>
<div style="position:absolute;left:1150px;top:926px;width:3px;height:3px;background:#A0A0A0;"></div>
<div style="position:absolute;left:1170px;top:913px;width:19px;height:19px;background:#fff;border:1px solid #8C8C8C;"><svg style="position:absolute;left:5px;top:4px" width="6" height="10"><polygon points="5,0 5,9 0,4.5" fill="#222"/></svg></div>
<div style="position:absolute;left:1189px;top:913px;width:598px;height:19px;background:#fff;border:1px solid #8C8C8C;"></div>
<div style="position:absolute;left:1787px;top:914px;width:86px;height:17px;background:#F0F0F0;"></div>
<div style="position:absolute;left:1873px;top:913px;width:19px;height:19px;background:#fff;border:1px solid #8C8C8C;"><svg style="position:absolute;left:7px;top:4px" width="6" height="10"><polygon points="0,0 0,9 5,4.5" fill="#222"/></svg></div>
<div style="position:absolute;left:0px;top:939px;width:1919px;height:27px;background:#F3F3F3;"></div>
<div style="position:absolute;left:0px;top:965px;width:1921px;height:1px;background:#8F8F8F;"></div>
<div style="position:absolute;left:14px;top:946.33px;white-space:nowrap;font-size:12.6px;line-height:12.6px;transform:scaleX(0.9614);transform-origin:left 50%;color:#262626;">Ready</div>
<svg style="position:absolute;left:77px;top:943px" width="17" height="18"><rect x="1.5" y="5.5" width="13" height="10" fill="none" stroke="#606060" stroke-width="1"/><rect x="8" y="2" width="7" height="3.3" fill="#606060"/><circle cx="3.8" cy="4.2" r="3.4" fill="#606060"/><g fill="#606060"><rect x="4" y="8" width="2" height="1"/><rect x="7" y="8" width="2" height="1"/><rect x="10" y="8" width="2" height="1"/><rect x="4" y="10" width="2" height="1"/><rect x="7" y="10" width="2" height="1"/><rect x="10" y="10" width="2" height="1"/><rect x="4" y="13" width="2" height="1"/><rect x="7" y="13" width="2" height="1"/><rect x="10" y="13" width="2" height="1"/></g></svg>
<svg style="position:absolute;left:115px;top:943px" width="22" height="21"><path d="M8,2.2 A7.2,7.2 0 0,0 8,16.6" fill="none" stroke="#555" stroke-width="1.2" stroke-dasharray="2.6,1.6"/><path d="M8.5,1 V9.5 M6,7 L8.5,9.6 L11,7 M11.5,7.4 H16.5 M14.5,5.2 L16.7,7.4 L14.5,9.6" fill="none" stroke="#444" stroke-width="1.1"/><path d="M10.8,18.2 L19.2,11.2" stroke="#444" stroke-width="2.2"/><path d="M11.2,10.8 L19.6,18.6" stroke="#444" stroke-width="1.2"/></svg>
<div style="position:absolute;left:138px;top:945.57px;white-space:nowrap;font-size:13.5px;line-height:13.5px;font-weight:bold;transform:scaleX(0.9379);transform-origin:left 50%;color:#262626;">Accessibility: Investigate</div>
<svg style="position:absolute;left:1408px;top:942px" width="22" height="22"><rect x="1" y="1" width="19" height="13" rx="1.5" fill="#4F4F4F"/><rect x="5" y="17.4" width="5" height="1.4" fill="#4F4F4F"/><g transform="translate(14.4,14.3)"><circle r="5.6" fill="#F3F3F3"/><g fill="#F3F3F3"><rect x="-2.4" y="-6.6" width="4.8" height="4" transform="rotate(30)"/><rect x="-2.4" y="-6.6" width="4.8" height="4" transform="rotate(90)"/><rect x="-2.4" y="-6.6" width="4.8" height="4" transform="rotate(150)"/><rect x="-2.4" y="-6.6" width="4.8" height="4" transform="rotate(210)"/><rect x="-2.4" y="-6.6" width="4.8" height="4" transform="rotate(270)"/><rect x="-2.4" y="-6.6" width="4.8" height="4" transform="rotate(330)"/></g><g fill="#4F4F4F"><rect x="-1.4" y="-5.6" width="2.8" height="3" transform="rotate(30)"/><rect x="-1.4" y="-5.6" width="2.8" height="3" transform="rotate(90)"/><rect x="-1.4" y="-5.6" width="2.8" height="3" transform="rotate(150)"/><rect x="-1.4" y="-5.6" width="2.8" height="3" transform="rotate(210)"/><rect x="-1.4" y="-5.6" width="2.8" height="3" transform="rotate(270)"/><rect x="-1.4" y="-5.6" width="2.8" height="3" transform="rotate(330)"/></g><circle r="4" fill="#4F4F4F"/><circle r="1.7" fill="#F3F3F3"/></g></svg>
<div style="position:absolute;left:1430px;top:946.00px;white-space:nowrap;font-size:13px;line-height:13px;transform:scaleX(0.9763);transform-origin:left 50%;color:#262626;">Display Settings</div>
<div style="position:absolute;left:1547px;top:939px;width:50px;height:26px;background:#C6C6C6;"></div>
<svg style="position:absolute;left:1563px;top:943px" width="18" height="18"><g fill="none" stroke="#707070" stroke-width="1.2"><rect x="1.5" y="1.5" width="15" height="15"/><path d="M6.5,1.5 V16.5 M11.5,1.5 V16.5 M1.5,6.5 H16.5 M1.5,11.5 H16.5"/></g></svg>
<svg style="position:absolute;left:1612px;top:943px" width="19" height="18"><g fill="none" stroke="#707070" stroke-width="1"><rect x="1.5" y="1.5" width="16" height="14"/><rect x="5.5" y="3.5" width="8" height="10"/><path d="M7,6.5 H12 M7,8.5 H12 M7,10.5 H12"/></g></svg>
<svg style="position:absolute;left:1662px;top:943px" width="19" height="18"><g fill="none" stroke="#707070" stroke-width="1.2"><rect x="1.5" y="1.5" width="16" height="15"/><path d="M1.5,10.5 H11.5 V1.5 M6.5,1.5 V10.5"/></g></svg>
<div style="position:absolute;left:1704px;top:951px;width:10px;height:1px;background:#555;"></div>
<div style="position:absolute;left:1720px;top:952px;width:125px;height:1px;background:#777;"></div>
<div style="position:absolute;left:1780px;top:945px;width:6px;height:14px;background:#555;"></div>
<div style="position:absolute;left:1850px;top:951px;width:11px;height:1px;background:#555;"></div>
<div style="position:absolute;left:1855px;top:946px;width:1px;height:11px;background:#555;"></div>
<div style="position:absolute;left:1877px;top:946.00px;white-space:nowrap;font-size:13px;line-height:13px;transform:scaleX(0.9023);transform-origin:left 50%;color:#555;">100%</div>
</body></html>
